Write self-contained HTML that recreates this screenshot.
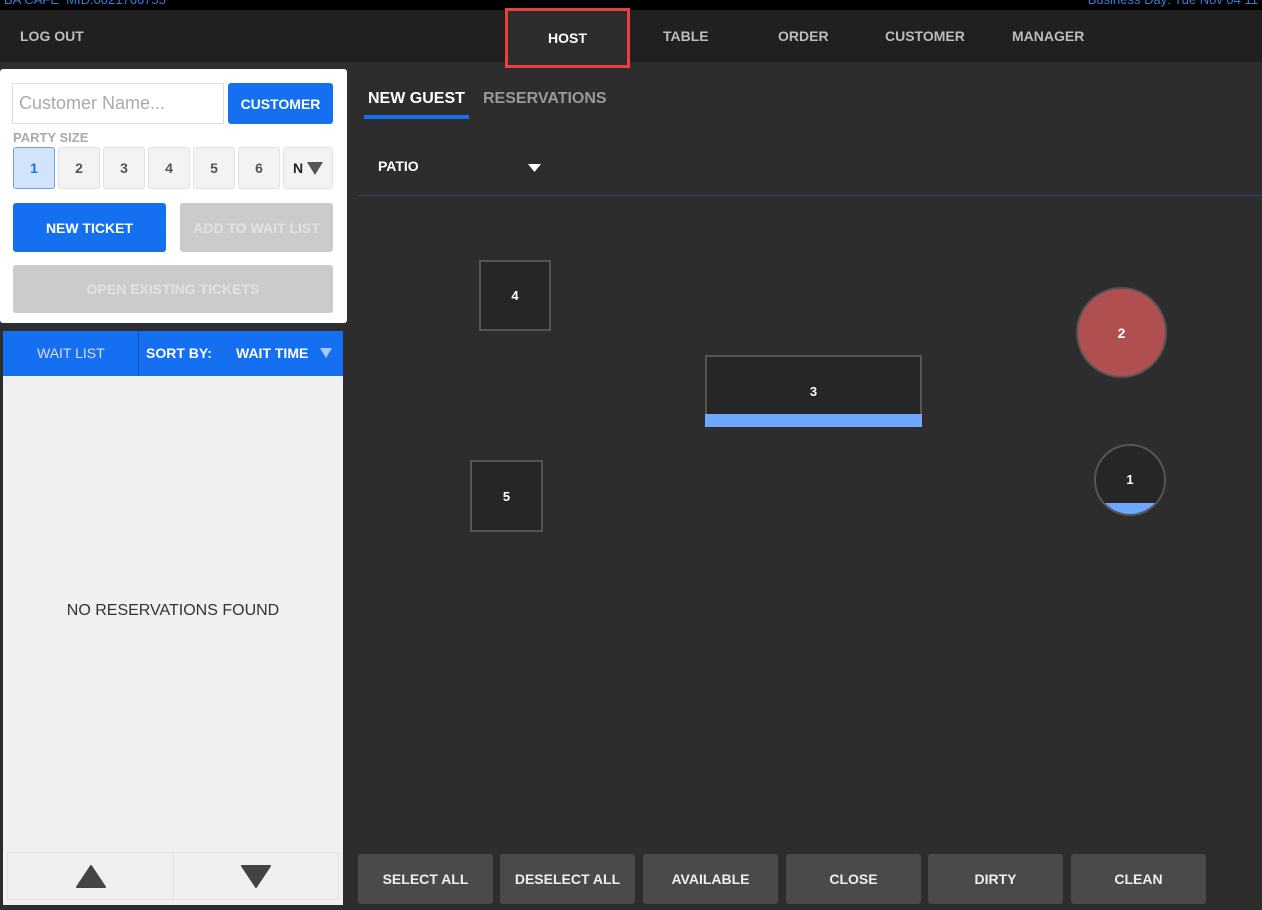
<!DOCTYPE html>
<html><head><style>
*{box-sizing:border-box;margin:0;padding:0}
body{width:1262px;height:910px;background:#2d2d2d;font-family:"Liberation Sans",sans-serif;position:relative;overflow:hidden}
.a{position:absolute}
.c{display:flex;align-items:center;justify-content:center}
.nav{color:#bbb;font-weight:bold;font-size:14px}
.ps{top:147px;width:42px;height:42px;background:#f3f3f3;border:1px solid #e2e2e2;border-radius:3px;color:#555;font-size:14px;font-weight:bold}
.bb{top:854px;width:135px;height:50px;background:#4a4a4a;border-radius:3px;color:#eee;font-weight:bold;font-size:14px}
.tbl{background:#262626;border:2px solid #555;color:#fff;font-weight:bold;font-size:13px}
</style></head><body>
<div class="a" style="left:0;top:0;width:1262px;height:10px;background:#000;overflow:hidden">
<div class="a" style="left:4px;top:-8px;color:#3a7bd5;font-size:13px">BA CAFE &nbsp;MID:0021766755</div>
<div class="a" style="right:4px;top:-8px;color:#3a7bd5;font-size:13px">Business Day: Tue Nov 04 11</div></div>
<div class="a" style="left:0;top:10px;width:1262px;height:52px;background:#202020"></div>
<div class="a nav" style="left:20px;top:28px">LOG OUT</div>
<div class="a c" style="left:505px;top:8px;width:125px;height:60px;background:#2d2d2d;border:3px solid #e8403f;color:#fff;font-weight:bold;font-size:14px">HOST</div>
<div class="a nav" style="left:663px;top:28px">TABLE</div>
<div class="a nav" style="left:778px;top:28px">ORDER</div>
<div class="a nav" style="left:885px;top:28px">CUSTOMER</div>
<div class="a nav" style="left:1012px;top:28px">MANAGER</div>

<div class="a" style="left:0;top:69px;width:347px;height:254px;background:#fff;border-radius:3px"></div>
<div class="a" style="left:12px;top:83px;width:212px;height:41px;border:1px solid #ddd;color:#aaa;font-size:18px;padding:9px 6px">Customer Name...</div>
<div class="a c" style="left:228px;top:83px;width:105px;height:41px;background:#1570f1;border-radius:3px;color:#fff;font-weight:bold;font-size:14px">CUSTOMER</div>
<div class="a" style="left:13px;top:130px;color:#aaa;font-weight:bold;font-size:13px">PARTY SIZE</div>
<div class="a c ps" style="left:13px;background:#d2e3fc;border-color:#6da0f0;color:#1570f1">1</div>
<div class="a c ps" style="left:58px">2</div>
<div class="a c ps" style="left:103px">3</div>
<div class="a c ps" style="left:148px">4</div>
<div class="a c ps" style="left:193px">5</div>
<div class="a c ps" style="left:238px">6</div>
<div class="a c ps" style="left:283px;width:50px;color:#222">N&nbsp;<svg width="16" height="14"><path d="M0 1h16l-8 13z" fill="#555"/></svg></div>
<div class="a c" style="left:13px;top:203px;width:153px;height:49px;background:#1570f1;border-radius:3px;color:#fff;font-weight:bold;font-size:14px">NEW TICKET</div>
<div class="a c" style="left:180px;top:203px;width:153px;height:49px;background:#cbcbcb;border-radius:3px;color:#e2e2e2;font-weight:bold;font-size:14px">ADD TO WAIT LIST</div>
<div class="a c" style="left:13px;top:265px;width:320px;height:48px;background:#cbcbcb;border-radius:3px;color:#e2e2e2;font-weight:bold;font-size:14px">OPEN EXISTING TICKETS</div>

<div class="a" style="left:3px;top:331px;width:340px;height:574px;background:#f0f0f0"></div>
<div class="a" style="left:3px;top:331px;width:340px;height:45px;background:#1570f1"></div>
<div class="a" style="left:138px;top:331px;width:1px;height:45px;background:#0d4fb0"></div>
<div class="a" style="left:37px;top:345px;color:#dde;font-size:14px">WAIT LIST</div>
<div class="a" style="left:146px;top:345px;color:#fff;font-weight:bold;font-size:14px">SORT BY:</div>
<div class="a" style="left:236px;top:345px;color:#fff;font-weight:bold;font-size:14px">WAIT TIME</div>
<svg class="a" style="left:320px;top:348px" width="12" height="10"><path d="M0 0h12l-6 10z" fill="#a7c8f8"/></svg>
<div class="a" style="left:0;top:602px;width:346px;text-align:center;color:#333;font-size:16px">NO RESERVATIONS FOUND</div>
<div class="a c" style="left:7px;top:852px;width:332px;height:48px;background:#f0f0f0;border:1px solid #e2e2e2"></div>
<div class="a" style="left:173px;top:852px;width:1px;height:48px;background:#e2e2e2"></div>
<svg class="a" style="left:75px;top:864px" width="32" height="25"><path d="M16 2L30 23H2z" fill="#444" stroke="#444" stroke-linejoin="round" stroke-width="2"/></svg>
<svg class="a" style="left:240px;top:864px" width="32" height="25"><path d="M2 2H30L16 23z" fill="#444" stroke="#444" stroke-linejoin="round" stroke-width="2"/></svg>

<div class="a" style="left:368px;top:90px;color:#fff;font-weight:bold;font-size:16px">NEW GUEST</div>
<div class="a" style="left:364px;top:115px;width:105px;height:4px;background:#1570f1"></div>
<div class="a" style="left:483px;top:90px;color:#999;font-weight:bold;font-size:16px">RESERVATIONS</div>
<div class="a" style="left:378px;top:158px;color:#fff;font-weight:bold;font-size:14px">PATIO</div>
<svg class="a" style="left:528px;top:164px" width="13" height="8"><path d="M0 0h13l-6.5 8z" fill="#fff"/></svg>
<div class="a" style="left:358px;top:195px;width:904px;height:1px;background:#25477d"></div>

<div class="a c tbl" style="left:479px;top:260px;width:72px;height:71px">4</div>
<div class="a c tbl" style="left:470px;top:460px;width:73px;height:72px">5</div>
<div class="a c tbl" style="left:705px;top:355px;width:217px;height:72px;padding-bottom:0">3</div>
<div class="a" style="left:705px;top:414px;width:217px;height:13px;background:#6ea8fe"></div>
<div class="a c" style="left:1076px;top:287px;width:91px;height:91px;border-radius:50%;background:#b04f4f;border:2px solid #555;color:#fff;font-weight:bold;font-size:14px">2</div>
<div class="a c" style="left:1094px;top:444px;width:72px;height:72px;border-radius:50%;background:#262626;border:2px solid #555;color:#fff;font-weight:bold;font-size:13px;overflow:hidden"><span style="margin-top:-2px">1</span><div class="a" style="left:0;top:57px;width:72px;height:15px;background:#6ea8fe"></div></div>

<div class="a c bb" style="left:358px">SELECT ALL</div>
<div class="a c bb" style="left:500px">DESELECT ALL</div>
<div class="a c bb" style="left:643px">AVAILABLE</div>
<div class="a c bb" style="left:786px">CLOSE</div>
<div class="a c bb" style="left:928px">DIRTY</div>
<div class="a c bb" style="left:1071px">CLEAN</div>
</body></html>
